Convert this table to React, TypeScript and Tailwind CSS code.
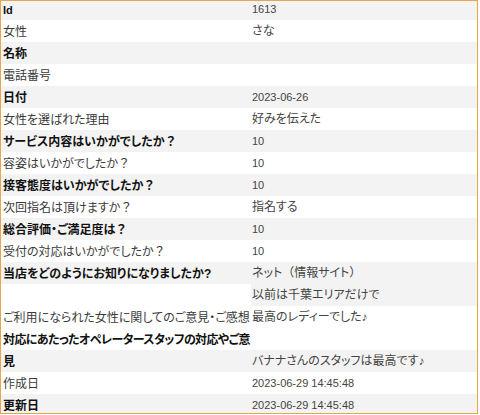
type Row = {
  label: string;
  value: string;
  bold?: boolean;
  tight?: boolean;
  bg: "gray" | "white" | "split";
};

const rows: Row[] = [
  { label: "Id", value: "1613", bold: true, bg: "gray" },
  { label: "女性", value: "さな", bg: "white" },
  { label: "名称", value: "", bold: true, bg: "gray" },
  { label: "電話番号", value: "", bg: "white" },
  { label: "日付", value: "2023-06-26", bold: true, bg: "gray" },
  { label: "女性を選ばれた理由", value: "好みを伝えた", bg: "white" },
  { label: "サービス内容はいかがでしたか？", value: "10", bold: true, bg: "gray" },
  { label: "容姿はいかがでしたか？", value: "10", bg: "white" },
  { label: "接客態度はいかがでしたか？", value: "10", bold: true, bg: "gray" },
  { label: "次回指名は頂けますか？", value: "指名する", bg: "white" },
  { label: "総合評価・ご満足度は？", value: "10", bold: true, bg: "gray" },
  { label: "受付の対応はいかがでしたか？", value: "10", bg: "white" },
  { label: "当店をどのようにお知りになりましたか?", value: "ネット（情報サイト）", bold: true, bg: "gray" },
  { label: "", value: "以前は千葉エリアだけで", bg: "split" },
  { label: "ご利用になられた女性に関してのご意見・ご感想", value: "最高のレディーでした♪", bg: "white" },
  { label: "対応にあたったオペレータースタッフの対応やご意", value: "", bold: true, tight: true, bg: "white" },
  { label: "見", value: "バナナさんのスタッフは最高です♪", bold: true, bg: "gray" },
  { label: "作成日", value: "2023-06-29 14:45:48", bg: "white" },
  { label: "更新日", value: "2023-06-29 14:45:48", bold: true, bg: "gray" },
];

const isLatin = (s: string) => /^[\x20-\x7e]+$/.test(s);

// full-width ？ and brackets keep their width, the rest is set proportional
function Text({ text }: { text: string }) {
  const parts = text.split(/([？（）])/);
  return (
    <>
      {parts.map((p, i) =>
        /^[？（）]$/.test(p) ? (
          <span key={i} className="[font-feature-settings:normal]">
            {p}
          </span>
        ) : (
          <span key={i}>{p}</span>
        )
      )}
    </>
  );
}

function Cell({ text, className }: { text: string; className: string }) {
  return (
    <span className={`${className} ${isLatin(text) ? "text-[11px]" : "text-[12px]"}`}>
      <Text text={text} />
    </span>
  );
}

export default function App() {
  return (
    <div className="w-[478px] h-[414px] overflow-hidden border border-[#e6a650] bg-white font-['Liberation_Sans','Noto_Sans_CJK_JP',sans-serif] [font-feature-settings:'palt']">
      <div className="-mt-[3px] flex flex-col">
        {rows.map((row, i) => (
          <div
            key={i}
            className={`flex h-[22px] items-center ${row.bg === "gray" ? "bg-[#f3f3f3]" : "bg-white"}`}
          >
            <div className="w-[250px] shrink-0 pl-[2px] whitespace-nowrap leading-none">
              <Cell
                text={row.label}
                className={`${row.bold ? "font-bold text-[#111]" : "text-[#3a3a3a]"} ${
                  row.tight ? "tracking-[-0.6px]" : ""
                }`}
              />
            </div>
            <div
              className={`flex h-full flex-1 items-center pl-[1px] whitespace-nowrap leading-none ${
                row.bg === "split" ? "bg-[#f3f3f3]" : ""
              }`}
            >
              <Cell text={row.value} className="text-[#444]" />
            </div>
          </div>
        ))}
      </div>
    </div>
  );
}
